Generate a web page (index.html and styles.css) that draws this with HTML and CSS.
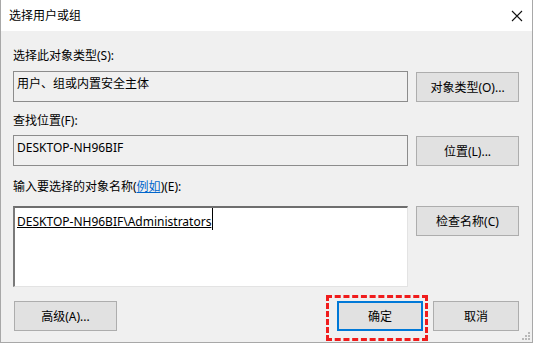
FILE: index.html
```html
<!DOCTYPE html>
<html lang="zh-CN">

<head>
  <meta charset="UTF-8" />
  <title>选择用户或组</title>
  <link rel="stylesheet" href="styles.css">
</head>

<body>
  <div class="window">
    <div class="titlebar">
      <span class="title">选择用户或组</span>
      <svg class="close" width="12" height="12" viewBox="0 0 12 12">
        <path d="M1 1 L11 11 M11 1 L1 11" stroke="#111" stroke-width="1.1" fill="none" />
      </svg>
    </div>

    <div class="content">
      <div class="label first">选择此对象类型(S):</div>
      <div class="row">
        <div class="field readonly">用户、组或内置安全主体</div>
        <button class="btn">对象类型(O)...</button>
      </div>

      <div class="label">查找位置(F):</div>
      <div class="row">
        <div class="field readonly">DESKTOP-NH96BIF</div>
        <button class="btn">位置(L)...</button>
      </div>

      <div class="label names-label">输入要选择的对象名称(<a class="link" href="#">例如</a>)(E):</div>
      <div class="row names-row">
        <div class="field names"><span class="typed">DESKTOP-NH96BIF\Administrators</span><span class="caret"></span></div>
        <button class="btn">检查名称(C)</button>
      </div>

      <div class="footer">
        <button class="btn">高级(A)...</button>
        <div class="footer-right">
          <span class="marked"><button class="btn btn-default">确定</button></span>
          <button class="btn btn-cancel">取消</button>
        </div>
      </div>
    </div>

    <svg class="grip" width="10" height="10" viewBox="0 0 10 10">
      <rect x="7" y="1" width="2" height="2" fill="#b8b8b8" />
      <rect x="4" y="4" width="2" height="2" fill="#b8b8b8" />
      <rect x="7" y="4" width="2" height="2" fill="#b8b8b8" />
      <rect x="1" y="7" width="2" height="2" fill="#b8b8b8" />
      <rect x="4" y="7" width="2" height="2" fill="#b8b8b8" />
      <rect x="7" y="7" width="2" height="2" fill="#b8b8b8" />
    </svg>
  </div>
</body>

</html>
```

FILE: styles.css
```css
body {
  margin: 0;
  font-family: 'Noto Sans', 'Noto Sans CJK SC', sans-serif;
  font-size: 12px;
  color: #000;
  background: #3b3b3b;
}

.window {
  position: relative;
  width: 533px;
  height: 343px;
  box-sizing: border-box;
  background: #f0f0f0;
  border: 1px solid #a8a8a8;
  border-top: none;
}

.titlebar {
  height: 31px;
  background: #fff;
  display: flex;
  align-items: center;
  justify-content: space-between;
  padding: 0 9px 0 8px;
}

.title {
  line-height: 16px;
}

.close {
  display: block;
}

.content {
  padding: 0 13px 0 12px;
}

.label {
  line-height: 16px;
  margin-top: 11px;
  margin-bottom: 6px;
}

.label.first {
  margin-top: 17px;
  margin-bottom: 7px;
}

.label.names-label {
  margin-top: 13px;
  margin-bottom: 11px;
}

.row {
  display: flex;
  align-items: flex-start;
  gap: 8px;
}

.field {
  box-sizing: border-box;
  width: 395px;
  line-height: 16px;
}

.field.readonly {
  height: 31px;
  padding: 4px 3px;
  background: #f0f0f0;
  border: 1px solid #8c8c8c;
}

.field.names {
  height: 81px;
  padding: 0 2px;
  background: #fff;
  border: 1px solid #e3e3e3;
  border-top: 2px solid #6e6e6e;
  border-left: 2px solid #7a7a7a;
  display: flex;
  align-items: flex-start;
}

.typed {
  text-decoration: underline;
  margin-top: 6px;
}

.caret {
  display: inline-block;
  width: 1px;
  height: 22px;
  background: #000;
  margin-left: 1px;
}

.link {
  color: #0066cc;
  text-decoration: underline;
}

.btn {
  box-sizing: border-box;
  width: 103px;
  height: 30px;
  margin-top: 1px;
  padding: 0;
  background: #e1e1e1;
  border: 1px solid #adadad;
  font-family: inherit;
  font-size: 12px;
  color: #000;
}

.names-row .btn {
  margin-top: 0;
}

.footer {
  display: flex;
  justify-content: space-between;
  align-items: flex-start;
  margin-top: 13px;
  padding-left: 1px;
}

.footer-right {
  display: flex;
  gap: 10px;
}

.btn-default,
.btn-cancel {
  width: 86px;
}

.btn-default {
  border: 2px solid #0078d7;
}

.marked {
  position: relative;
  display: block;
}

/* red dashed highlight drawn round the OK button */
.marked::after {
  content: '';
  position: absolute;
  top: -5px;
  bottom: -10px;
  left: -11px;
  right: -5px;
  border: 3px dashed #f01c1c;
}

.grip {
  position: absolute;
  right: 1px;
  bottom: 1px;
}
```
